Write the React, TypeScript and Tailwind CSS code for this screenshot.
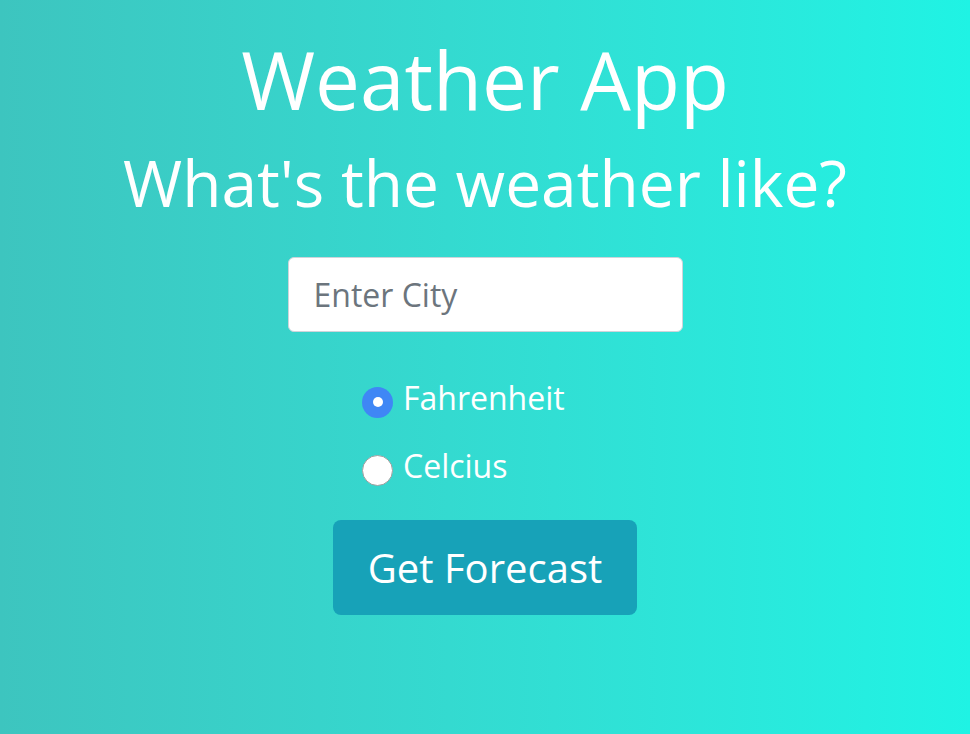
import React, { useState } from "react";

export default function App() {
  const [unit, setUnit] = useState("F");
  return (
    <div
      className="w-full h-[734px] flex flex-col items-center text-white bg-gradient-to-r from-[#3dc5bf] to-[#1ff3e4]"
      style={{ fontFamily: '"Open Sans", sans-serif' }}
    >
      <h1 className="mt-[31px] text-[80px] leading-[96px] font-normal">Weather App</h1>
      <h2 className="mt-[17px] text-[64px] leading-[77px] font-normal">What's the weather like?</h2>
      <input
        type="text"
        placeholder="Enter City"
        className="mt-[36px] w-[395px] h-[75px] bg-white border border-[#ced4da] rounded-[6px] pl-[25px] text-[32px] text-[#495057] placeholder:text-[#6c757d] outline-none"
      />
      <div className="mt-[50px] w-[246px] flex flex-col gap-[28px]">
        <label className="flex items-center gap-[10px] cursor-pointer" onClick={() => setUnit("F")}>
          <span
            className={
              unit === "F"
                ? "w-[31px] h-[31px] rounded-full bg-[#3f87f5] flex items-center justify-center"
                : "w-[31px] h-[31px] rounded-full bg-white border border-[#a0a0a0]"
            }
          >
            {unit === "F" && <span className="w-[10px] h-[10px] rounded-full bg-white" />}
          </span>
          <span className="text-[32px] leading-[32px] mb-[8px]">Fahrenheit</span>
        </label>
        <label className="flex items-center gap-[10px] cursor-pointer" onClick={() => setUnit("C")}>
          <span
            className={
              unit === "C"
                ? "w-[31px] h-[31px] rounded-full bg-[#3f87f5] flex items-center justify-center"
                : "w-[31px] h-[31px] rounded-full bg-white border border-[#a0a0a0]"
            }
          >
            {unit === "C" && <span className="w-[10px] h-[10px] rounded-full bg-white" />}
          </span>
          <span className="text-[32px] leading-[32px] mb-[8px]">Celcius</span>
        </label>
      </div>
      <button className="mt-[30px] w-[304px] h-[95px] rounded-[8px] bg-[#17a2b8] text-white text-[40px]">
        Get Forecast
      </button>
    </div>
  );
}
